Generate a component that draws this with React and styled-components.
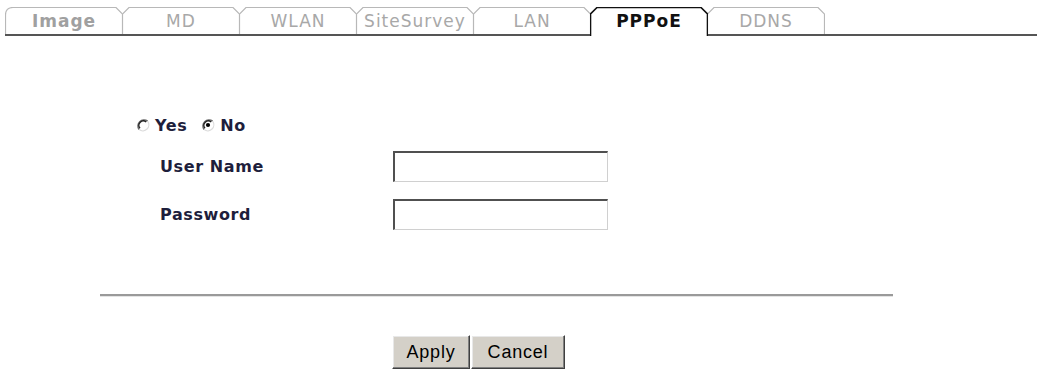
import React, { useState } from "react";
import styled, { createGlobalStyle } from "styled-components";

const GlobalStyle = createGlobalStyle`
  html, body {
    margin: 0;
    padding: 0;
    background: #ffffff;
  }
  body {
    font-family: "DejaVu Sans", Verdana, sans-serif;
    width: 1040px;
    height: 373px;
    overflow: hidden;
  }
`;

const TABS = ["Image", "MD", "WLAN", "SiteSurvey", "LAN", "PPPoE", "DDNS"];

const TabShape = ({ width, active, first }) => {
  const h = active ? 29 : 27;
  const left = first ? `M0.5,${h} V8 Q0.5,0.5 8,0.5` : `M0.5,${h} V7 L7,0.5`;
  const d = `${left} H${width - 7} L${width - 0.5},7 V${h}`;
  return (
    <TabSvg width={width} height={h} viewBox={`0 0 ${width} ${h}`}>
      <path
        d={d}
        fill="#ffffff"
        stroke={active ? "#111111" : "#b8b8b8"}
        strokeWidth={active ? 1.6 : 1.2}
      />
    </TabSvg>
  );
};

const Radio = ({ checked }) => (
  <RadioSvg width="14" height="14" viewBox="0 0 14 14">
    <circle cx="7" cy="7" r="6" fill="#ffffff" />
    <path d="M11.6,3.2 A6,6 0 0 0 3.2,11.6" fill="none" stroke="#6a6a6a" strokeWidth="1.6" />
    <path d="M10.2,4 A4.4,4.4 0 0 0 4,10.2" fill="none" stroke="#222222" strokeWidth="1.3" />
    <path d="M3.2,11.6 A6,6 0 0 0 11.6,3.2" fill="none" stroke="#dcdcdc" strokeWidth="1.2" />
    {checked && <circle cx="7" cy="7" r="2.1" fill="#000000" />}
  </RadioSvg>
);

const App = () => {
  const [pppoe, setPppoe] = useState(false);
  const [user, setUser] = useState("");
  const [pass, setPass] = useState("");
  const activeTab = "PPPoE";

  return (
    <>
      <GlobalStyle />
      <Page>
        <TabBar>
          {TABS.map((t, i) => (
            <Tab key={t} active={t === activeTab}>
              <TabShape width={118} active={t === activeTab} first={i === 0} />
              <TabLabel active={t === activeTab} bold={i === 0}>
                {t}
              </TabLabel>
            </Tab>
          ))}
        </TabBar>

        <Form>
          <RadioRow>
            <RadioOption onClick={() => setPppoe(true)}>
              <Radio checked={pppoe} />
              <span>Yes</span>
            </RadioOption>
            <RadioOption onClick={() => setPppoe(false)}>
              <Radio checked={!pppoe} />
              <span>No</span>
            </RadioOption>
          </RadioRow>

          <Field>
            <Label>User Name</Label>
            <TextInput
              type="text"
              value={user}
              onChange={(e) => setUser(e.target.value)}
            />
          </Field>
          <Field>
            <Label>Password</Label>
            <TextInput
              type="password"
              value={pass}
              onChange={(e) => setPass(e.target.value)}
            />
          </Field>
        </Form>

        <Divider />

        <Buttons>
          <Button width={78}>Apply</Button>
          <Button width={94}>Cancel</Button>
        </Buttons>
      </Page>
    </>
  );
};

const Page = styled.div`
  display: flex;
  flex-direction: column;
  padding-top: 7px;
`;

const TabBar = styled.div`
  display: flex;
  align-items: flex-start;
  margin: 0 3px 0 5px;
  height: 27px;
  border-bottom: 2px solid #555555;
`;

const Tab = styled.div`
  position: relative;
  width: 118px;
  height: ${({ active }) => (active ? "29px" : "27px")};
  display: flex;
  align-items: center;
  justify-content: center;
  z-index: ${({ active }) => (active ? 2 : 1)};
  margin-right: -1px;
`;

const TabSvg = styled.svg`
  position: absolute;
  left: 0;
  top: 0;
  display: block;
`;

const TabLabel = styled.span`
  position: relative;
  margin-top: ${({ active }) => (active ? "-1px" : "1px")};
  font-size: 17px;
  font-weight: ${({ active, bold }) => (active || bold ? 700 : 400)};
  letter-spacing: 1px;
  color: ${({ active, bold }) => (active ? "#111111" : bold ? "#a0a0a0" : "#a8a8a8")};
`;

const Form = styled.div`
  display: flex;
  flex-direction: column;
  padding-left: 136px;
  margin-top: 80px;
  color: #1e1e3c;
  font-weight: 700;
  font-size: 16px;
  letter-spacing: 0.6px;
`;

const RadioRow = styled.div`
  display: flex;
  align-items: center;
  gap: 14px;
  height: 18px;
  margin-bottom: 17px;
`;

const RadioOption = styled.label`
  display: flex;
  align-items: center;
  gap: 5px;
  cursor: pointer;
`;

const RadioSvg = styled.svg`
  display: block;
  flex: none;
`;

const Field = styled.div`
  display: flex;
  align-items: center;
  padding-left: 24px;
  height: 31px;
  margin-bottom: 17px;
`;

const Label = styled.span`
  width: 233px;
  flex: none;
`;

const TextInput = styled.input`
  box-sizing: border-box;
  width: 215px;
  height: 31px;
  margin: 0;
  padding: 2px 4px;
  font-family: "Liberation Sans", Arial, sans-serif;
  font-size: 16px;
  background: #ffffff;
  border-style: solid;
  border-width: 2px 1px 1px 2px;
  border-color: #505050 #d0d0d0 #d0d0d0 #505050;
  outline: none;
`;

const Divider = styled.div`
  margin: 47px 0 0 100px;
  width: 793px;
  height: 2px;
  background: #9a9a9a;
  border-bottom: 1px solid #e4e4e4;
`;

const Buttons = styled.div`
  display: flex;
  gap: 1px;
  margin: 38px 0 0 392px;
`;

const Button = styled.button`
  box-sizing: border-box;
  width: ${({ width }) => width}px;
  height: 34px;
  margin: 0;
  padding: 0;
  background: #d4d0c8;
  font-family: "Liberation Sans", Arial, sans-serif;
  font-size: 18px;
  letter-spacing: 0.8px;
  color: #000000;
  border: 1px solid;
  border-color: #ffffff #404040 #404040 #ffffff;
  box-shadow: inset -1px -1px 0 #808080, inset 1px 1px 0 #e8e8e8;
  cursor: pointer;
`;

export default App;
